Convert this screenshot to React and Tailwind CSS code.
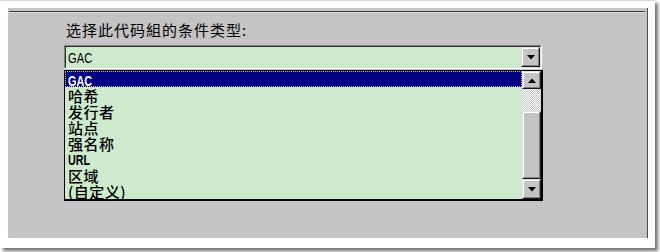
import React from 'react';

const items = [
  { label: 'GAC', latin: true },
  { label: '哈希' },
  { label: '发行者' },
  { label: '站点' },
  { label: '强名称' },
  { label: 'URL', latin: true },
  { label: '区域' },
  { label: '(自定义)' },
];

// classic 3D raised box (buttons, thumb)
function Raised({ className = '', children }) {
  return (
    <div className={`border border-t-[#e0e0e0] border-l-[#e0e0e0] border-r-[#1a1a1a] border-b-[#1a1a1a] bg-[#c5c3c5] ${className}`}>
      <div className="h-full w-full border border-t-white border-l-white border-r-[#828082] border-b-[#828082] flex items-center justify-center">
        {children}
      </div>
    </div>
  );
}

function ArrowDown() {
  return (
    <svg width="8" height="5" viewBox="0 0 8 5">
      <path d="M0 0h8L4 4.5z" fill="#000" />
    </svg>
  );
}

function ArrowUp() {
  return (
    <svg width="8" height="5" viewBox="0 0 8 5">
      <path d="M0 5h8L4 0.5z" fill="#000" />
    </svg>
  );
}

export default function App() {
  return (
    <div className="w-[660px] h-[252px] bg-white">
      <div className="w-[655px] h-[248px] bg-white border-t border-[#dadada] pt-[7px] pl-2 shadow-[3px_3px_3px_rgba(0,0,0,0.55)]">
        <div className="w-[640px] h-[230px] bg-[#c5c3c5] border-r border-[#4a4a4a] pt-[3px] text-black font-['Noto_Sans_CJK_SC',sans-serif]">

          {/* etched separator */}
          <div className="ml-px mr-[2px] border-t border-[#3a3a3a] border-b border-b-[#dcdcdc]" />

          {/* label */}
          <div className="ml-[58px] mt-[8px] h-4 leading-[18px] text-[15px] tracking-[1px]">
            选择此代码組的条件类型:
          </div>

          {/* combobox */}
          <div className="ml-[56px] mt-[8px] w-[478px] h-6 border border-t-[#828082] border-l-[#828082] border-r-white border-b-white">
            <div className="h-full w-full flex border border-t-[#303030] border-l-[#303030] border-r-[#dcdcdc] border-b-[#dcdcdc] bg-[#cdeacd]">
              <div className="flex-1 pl-[2px] leading-[23px] text-[14px] font-['Liberation_Sans',sans-serif]">
                <span className="inline-block origin-left scale-x-[0.8]">GAC</span>
              </div>
              <Raised className="w-[19px] h-5">
                <ArrowDown />
              </Raised>
            </div>
          </div>

          {/* dropped list */}
          <div className="ml-[56px] mt-px w-[479px] h-[131px] flex border-l border-t border-r-2 border-b-2 border-black bg-[#cdeacd]">
            <div className="flex-1 flex flex-col">
              {items.map((it, i) => (
                <div
                  key={it.label}
                  className={`h-4 ${i === 0 ? 'bg-[#000080] text-white border border-dotted border-[#c8c878] pl-[2px]' : 'pl-[3px]'} ${it.latin ? "leading-[17px] text-[15px] font-bold font-['Liberation_Sans',sans-serif]" : 'leading-[17px] text-[15px] tracking-[0.5px] font-medium'}`}
                >
                  {it.latin ? (
                    <span className="inline-block origin-left scale-x-[0.72]">{it.label}</span>
                  ) : (
                    it.label
                  )}
                </div>
              ))}
            </div>

            {/* scrollbar */}
            <div className="w-[19px] flex flex-col">
              <Raised className="h-[18px]">
                <ArrowUp />
              </Raised>
              <div className="h-[22px] bg-[repeating-conic-gradient(#ffffff_0_25%,#c5c3c5_0_50%)] bg-[length:2px_2px]" />
              <Raised className="flex-1" />
              <Raised className="h-5">
                <ArrowDown />
              </Raised>
            </div>
          </div>

        </div>
      </div>
    </div>
  );
}
